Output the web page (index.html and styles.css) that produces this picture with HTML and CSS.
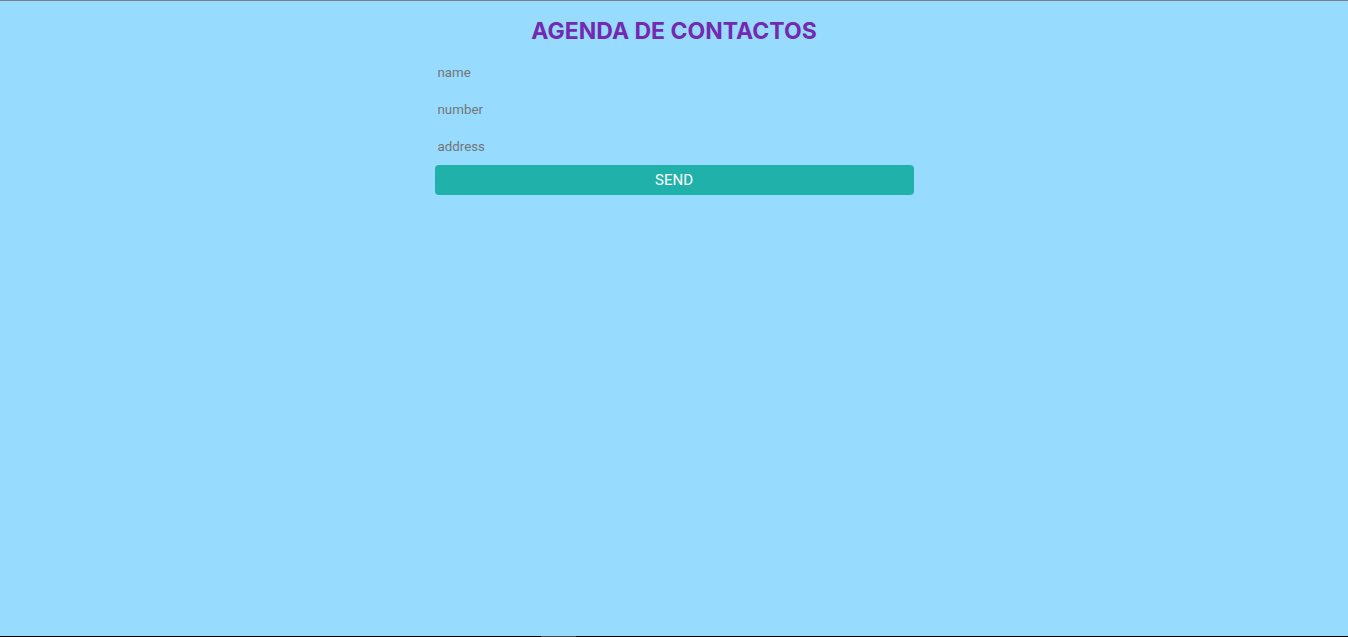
FILE: index.html
```html
<!DOCTYPE html>
<html lang="es">
<head>
<meta charset="utf-8">
<title>Agenda de contactos</title>
<link rel="stylesheet" href="styles.css">
</head>
<body>
<main class="agenda">
  <h1 class="agenda-title">AGENDA DE CONTACTOS</h1>
  <form class="agenda-form">
    <input class="agenda-input" type="text" placeholder="name">
    <input class="agenda-input" type="text" placeholder="number">
    <input class="agenda-input" type="text" placeholder="address">
    <button class="agenda-send" type="button">SEND</button>
  </form>
</main>
<div class="bottom-edge"><span class="bottom-mark"></span></div>
</body>
</html>
```
FILE: styles.css
```css
html, body {
  height: 100%;
}
body {
  margin: 0;
  background: #97dcff;
  border-top: 1px solid #7f7f7f;
  box-sizing: border-box;
  font-family: Roboto, "Liberation Sans", sans-serif;
}
.agenda {
  width: 479px;
  margin: 0 auto;
  display: flex;
  flex-direction: column;
  align-items: stretch;
}
.agenda-title {
  margin: 16px 0 8px;
  font-family: Inter, "Liberation Sans", sans-serif;
  font-size: 23px;
  line-height: 29px;
  font-weight: 700;
  text-align: center;
  color: #7429b1;
  letter-spacing: 0;
}
.agenda-form {
  display: flex;
  flex-direction: column;
}
.agenda-input {
  height: 37px;
  box-sizing: border-box;
  border: none;
  outline: none;
  background: transparent;
  padding: 0 3px;
  font-family: Roboto, "Liberation Sans", sans-serif;
  font-size: 13.33px;
  color: #333;
}
.agenda-input::placeholder {
  color: #757575;
}
.agenda-send {
  height: 30px;
  border: none;
  border-radius: 4px;
  background: #20b2aa;
  color: #ffffff;
  font-family: Roboto, "Liberation Sans", sans-serif;
  font-size: 15px;
  cursor: pointer;
}
.bottom-edge {
  position: fixed;
  left: 0;
  right: 0;
  bottom: 0;
  height: 1px;
  background: #000;
}
.bottom-mark {
  position: absolute;
  left: 541px;
  width: 35px;
  height: 1px;
  background: #444;
}
```
